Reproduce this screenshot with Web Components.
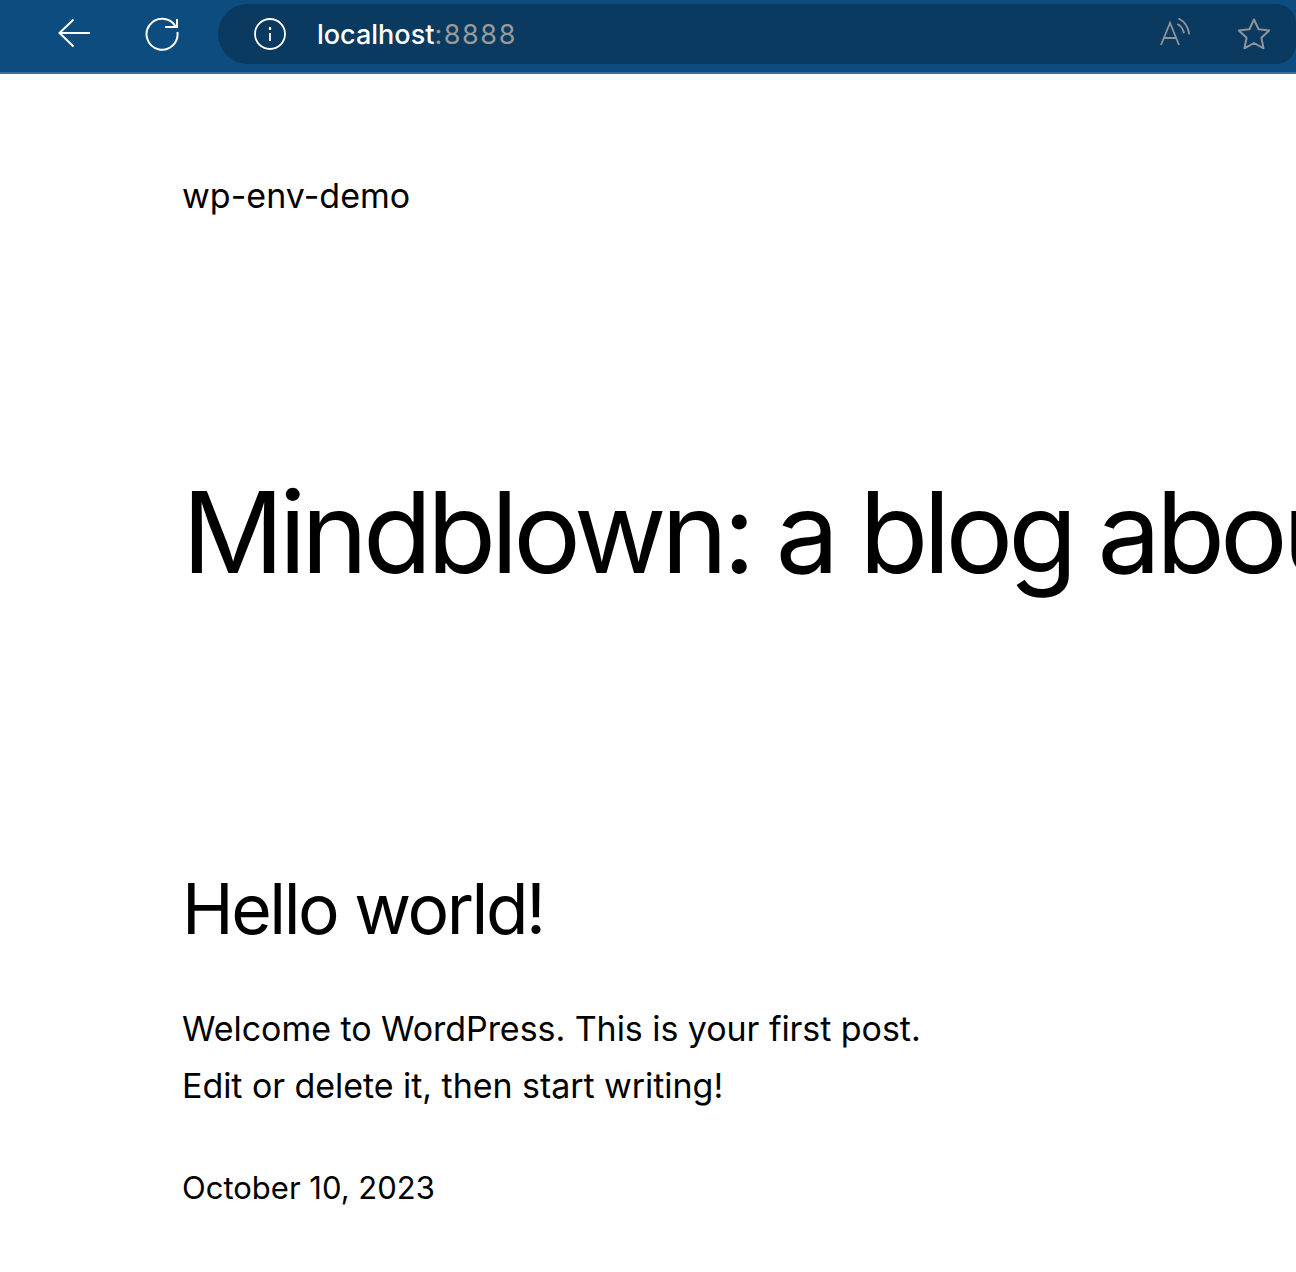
<!DOCTYPE html>
<html>
<head>
<meta charset="utf-8">
<title>wp-env-demo</title>
<style>
    html, body { margin: 0; padding: 0; background: #fff; }
    body { width: 1296px; height: 1272px; overflow: hidden; font-family: Inter, "Liberation Sans", sans-serif; color: #000; }
</style>
</head>
<body>
<browser-bar url="localhost" port=":8888"></browser-bar>
<blog-page>
    <span slot="site">wp-env-demo</span>
    <span slot="tagline">Mindblown: a blog about philosophy.</span>
    <blog-post title="Hello world!" date="October 10, 2023">
        Welcome to WordPress. This is your first post.<br>Edit or delete it, then start writing!
    </blog-post>
</blog-page>
<script>
class BrowserBar extends HTMLElement {
    constructor() {
        super();
        this.attachShadow({ mode: 'open' });
        this.shadowRoot.innerHTML = `
            <style>
                :host { display: flex; box-sizing: border-box; height: 74px; padding: 4px 0 8px 0; background: #0c4c7e; border-bottom: 2px solid #3a6f9e; }
                svg { display: block; flex: none; fill: none; }
                .nav { display: flex; align-items: center; width: 218px; flex: none; padding-left: 58px; gap: 54px; box-sizing: border-box; }
                .pill { flex: 1; display: flex; align-items: center; background: #0a3a60; border-radius: 30px 20px 20px 30px; padding: 0 25px 0 36px; }
                .url { margin-left: 31px; font-size: 27px; font-weight: 500; color: #fff; flex: 1; }
                .url span { color: #9a9a9a; font-weight: 400; letter-spacing: 1.6px; }
                .right { display: flex; align-items: center; gap: 45px; }
            </style>
            <div class="nav">
                <svg width="32" height="30" viewBox="0 0 32 30" stroke="#fff" stroke-width="2"><path d="M32 14 H1.5 M15.5 0.5 L1.5 14 L15.5 27.5"/></svg>
                <svg width="36" height="36" viewBox="0 0 36 36" stroke="#fff" stroke-width="2"><path d="M31.5 10.5 A15.5 15.5 0 1 0 33.4 16"/><path d="M33 3 V11 H21"/></svg>
            </div>
            <div class="pill">
                <svg width="32" height="32" viewBox="0 0 32 32" stroke="#fff" stroke-width="1.8"><circle cx="16" cy="16" r="15"/><path d="M16 15 V23"/><path d="M16 9 V12" stroke-width="2.2"/></svg>
                <div class="url">${this.getAttribute('url')}<span>${this.getAttribute('port')}</span></div>
                <div class="right">
                    <svg width="32" height="32" viewBox="0 0 32 32" stroke="#8f9498" stroke-width="1.8"><path d="M1 27 L10 5 L19 27 M4 20 H16"/><path d="M18.3 .5 C24 3 28 8 29.3 16.3 M17.3 6 C20.5 7.5 23 10.5 24 15.3"/></svg>
                    <svg width="34" height="32" viewBox="0 0 34 32" stroke="#8f9498" stroke-width="2" stroke-linejoin="round"><path d="M17 1.5 L21.6 11.2 L32.2 12.5 L24.4 19.8 L26.5 30.3 L17 25 L7.5 30.3 L9.6 19.8 L1.8 12.5 L12.4 11.2 Z"/></svg>
                </div>
            </div>
        `;
    }
}

class BlogPage extends HTMLElement {
    constructor() {
        super();
        this.attachShadow({ mode: 'open' });
        this.shadowRoot.innerHTML = `
            <style>
                :host { display: block; padding: 102px 0 0 182px; overflow: hidden; }
                .site { font-size: 34px; line-height: 40px; letter-spacing: 0.03px; white-space: nowrap; }
                h1 { margin: 256px 0 0 0; font-size: 113px; line-height: 120px; font-weight: 400; white-space: nowrap; letter-spacing: -5.1px; word-spacing: -1.5px; }
            </style>
            <div class="site"><slot name="site"></slot></div>
            <h1><slot name="tagline"></slot></h1>
            <slot></slot>
        `;
    }
}

class BlogPost extends HTMLElement {
    constructor() {
        super();
        this.attachShadow({ mode: 'open' });
        this.shadowRoot.innerHTML = `
            <style>
                :host { display: block; margin-top: 279px; }
                h2 { margin: 0; font-size: 69.5px; line-height: 76px; font-weight: 400; letter-spacing: -2.45px; white-space: nowrap; }
                .body { margin-top: 53px; font-size: 34px; line-height: 57px; letter-spacing: -0.05px; }
                .date { margin-top: 54px; font-size: 31px; line-height: 40px; }
            </style>
            <h2>${this.getAttribute('title')}</h2>
            <div class="body"><slot></slot></div>
            <div class="date">${this.getAttribute('date')}</div>
        `;
    }
}

customElements.define('browser-bar', BrowserBar);
customElements.define('blog-page', BlogPage);
customElements.define('blog-post', BlogPost);
</script>
</body>
</html>
